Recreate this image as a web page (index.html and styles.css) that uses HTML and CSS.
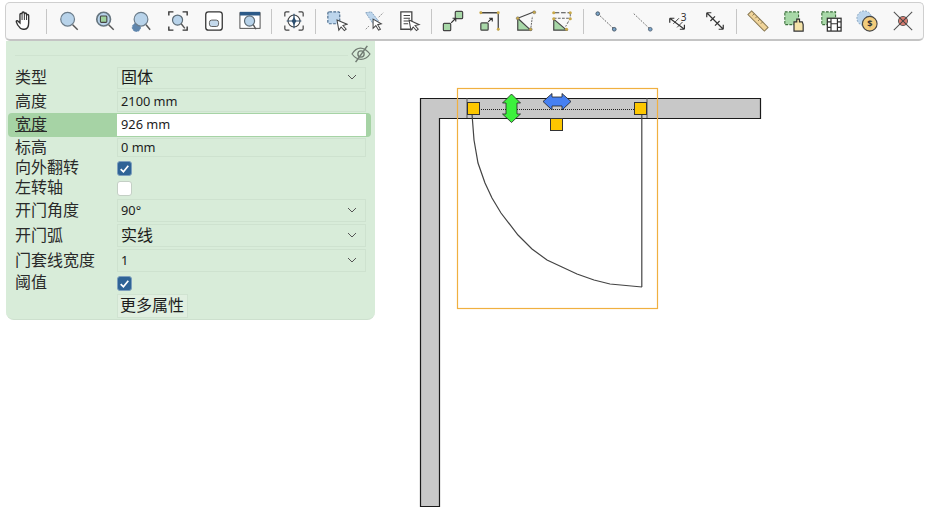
FILE: index.html
```html
<!DOCTYPE html>
<html lang="zh-CN">
<head>
    <meta charset="UTF-8">
    <title>门属性</title>
    <link rel="stylesheet" href="styles.css">
</head>
<body>
    <div class="toolbar">
        <span class="tool"><svg viewBox="0 0 24 24"><path d="M7 20c-2-2-4-5-4.500-7-.3-1.300 1.300-1.800 2-.8L6.500 14V5c0-1.600 2.300-1.600 2.300 0V3.500c0-1.700 2.500-1.700 2.500 0V4.500c0-1.600 2.400-1.600 2.400 0V6c0-1.500 2.300-1.500 2.300 0v8c0 4-1.500 7-4.500 7H10c-1.300 0-2.200-.3-3-1z" fill="#fff" stroke="#333" stroke-width="1.500"/><path d="M8.800 5v6M11.300 4v7M13.700 5v6" stroke="#333" stroke-width="1.100" fill="none"/></svg></span>
        <span class="sep"></span>
        <span class="tool"><svg viewBox="0 0 24 24"><circle cx="10.500" cy="10" r="7.500" fill="#b8d3ea" stroke="#6b7c8a" stroke-width="1.300"/><path d="M16 16l5.500 5.500" stroke="#555" stroke-width="1.600"/></svg></span>
        <span class="tool"><svg viewBox="0 0 24 24"><circle cx="10.500" cy="10" r="7.500" fill="#b8d3ea" stroke="#66757f" stroke-width="1.800"/><rect x="7" y="6.500" width="7" height="7" rx="1" fill="#9ed29c" stroke="#444" stroke-width="1.200"/><path d="M16 16l5.500 5.500" stroke="#555" stroke-width="1.600"/></svg></span>
        <span class="tool"><svg viewBox="0 0 24 24"><circle cx="7" cy="19" r="4.500" fill="#5f86ad" stroke="#5f86ad" stroke-dasharray="2 1"/><circle cx="12" cy="10" r="7.500" fill="#b8d3ea" stroke="#6b7c8a" stroke-width="1.300"/><path d="M17.500 16l4.500 5.500" stroke="#555" stroke-width="1.600"/></svg></span>
        <span class="tool"><svg viewBox="0 0 24 24"><path d="M2 6V2h5M17 2h5v4M2 18v4h5M17 22h5v-4" fill="none" stroke="#333" stroke-width="1.500"/><circle cx="11.500" cy="11" r="5.500" fill="#b8d3ea" stroke="#5c6b76" stroke-width="1.300"/><path d="M15.500 15l4 5" stroke="#555" stroke-width="1.500"/></svg></span>
        <span class="tool"><svg viewBox="0 0 24 24"><rect x="3" y="2" width="18" height="20" rx="3" fill="#fff" stroke="#333" stroke-width="1.400"/><rect x="7" y="11" width="10" height="7" rx="2.500" fill="#c4d9ec" stroke="#555"/></svg></span>
        <span class="tool"><svg viewBox="0 0 24 24"><rect x="1" y="3" width="22" height="17" fill="#fff" stroke="#444"/><rect x="1" y="2" width="22" height="4" fill="#2c5a88"/><circle cx="11.500" cy="12" r="5.500" fill="#b8d3ea" stroke="#5c6b76" stroke-width="1.300"/><path d="M15.500 16l3 5" stroke="#555" stroke-width="1.500"/></svg></span>
        <span class="sep"></span>
        <span class="tool"><svg viewBox="0 0 24 24"><path d="M2 7V3.500Q2 2 3.500 2H7M17 2h3.500Q22 2 22 3.500V7M2 17v3.500Q2 22 3.500 22H7M17 22h3.500q1.500 0 1.500-1.500V17" fill="none" stroke="#444" stroke-width="1.300"/><circle cx="12" cy="12" r="6.500" fill="#fff" stroke="#444" stroke-width="1.200"/><path d="M12 4v16M4 12h16" stroke="#2d4f70" stroke-width="1.300"/><path d="M12 7.500l2.500 4.500-2.500 4.500-2.500-4.500z" fill="#2d4f70"/></svg></span>
        <span class="sep"></span>
        <span class="tool"><svg viewBox="0 0 24 24"><rect x="2" y="2" width="13" height="13" rx="1.500" fill="#bcd5ec" stroke="#4f6f8f" stroke-width="1.300" stroke-dasharray="3 1.500"/><path d="M12 11l11 4.500-4.500 1.500 3.500 4-2 1.500-3.500-4-2.500 3.500z" fill="#fff" stroke="#444" stroke-width="1.100"/></svg></span>
        <span class="tool"><svg viewBox="0 0 24 24"><path d="M3 3l6-1 8 10-6 3z" fill="#bcd5ec" stroke="#7d9cba" stroke-dasharray="2 1"/><path d="M17 8l5-5M3 21l4-4" stroke="#888" stroke-dasharray="2 1"/><path d="M11 10l9 5-4 1 3 5-2 1-3-5-3 3z" fill="#fff" stroke="#444" stroke-width="1.100"/></svg></span>
        <span class="tool"><svg viewBox="0 0 24 24"><path d="M2 2h12v19H2z" fill="#fff" stroke="#444" stroke-width="1.400"/><path d="M5 6h7M5 9h7M5 12h7M5 15h5" stroke="#444" stroke-width="1.200"/><path d="M11 11l11 5-4.500 1 3.500 4-2 1.500-3.500-4-2.500 3.500z" fill="#fff" stroke="#444" stroke-width="1.100"/></svg></span>
        <span class="sep"></span>
        <span class="tool"><svg viewBox="0 0 24 24"><rect x="1.500" y="14.500" width="8" height="8" rx="1" fill="#a8d8a8" stroke="#444" stroke-width="1.300"/><rect x="14.500" y="1.500" width="8" height="8" rx="1" fill="#a8d8a8" stroke="#444" stroke-width="1.300"/><path d="M10 14l5-5M11.500 9H15v3.500" fill="none" stroke="#333" stroke-width="1.300"/></svg></span>
        <span class="tool"><svg viewBox="0 0 24 24"><rect x="2" y="14" width="8" height="8" rx="1" fill="#a8d8a8" stroke="#444" stroke-width="1.300"/><path d="M2 3h19v19" fill="none" stroke="#444" stroke-width="1.400"/><circle cx="2" cy="3" r="1.600" fill="#c8a848"/><circle cx="21" cy="3" r="1.600" fill="#c8a848"/><circle cx="21" cy="21" r="1.600" fill="#c8a848"/><path d="M10 13l4-4M11 9h3.500v3.500" fill="none" stroke="#333" stroke-width="1.200"/></svg></span>
        <span class="tool"><svg viewBox="0 0 24 24"><path d="M3 9l14 13H3z" fill="#a8d8a8" stroke="#444" stroke-width="1.300"/><path d="M3 9L21 2" fill="none" stroke="#444" stroke-width="1.200"/><path d="M17 22L19 7" fill="none" stroke="#555" stroke-dasharray="2 1"/><circle cx="3" cy="9" r="1.700" fill="#c8a848" stroke="#666" stroke-width=".5"/><circle cx="21" cy="2.500" r="1.700" fill="#c8a848" stroke="#666" stroke-width=".5"/><circle cx="17" cy="21" r="1.700" fill="#c8a848" stroke="#666" stroke-width=".5"/></svg></span>
        <span class="tool"><svg viewBox="0 0 24 24"><path d="M3 10l14 12H3z" fill="#a8d8a8" stroke="#444" stroke-width="1.300"/><path d="M4 3h16" fill="none" stroke="#444" stroke-width="1.200" stroke-dasharray="5 2"/><path d="M3 9h18M21 4v5L16 18" fill="none" stroke="#555" stroke-dasharray="3 1.500"/><circle cx="3" cy="3" r="1.700" fill="#c8a848"/><circle cx="21" cy="3" r="1.700" fill="#c8a848"/><circle cx="3" cy="9.500" r="1.700" fill="#c8a848"/><circle cx="21" cy="9.500" r="1.700" fill="#c8a848"/><circle cx="17" cy="21" r="1.700" fill="#c8a848"/></svg></span>
        <span class="sep"></span>
        <span class="tool"><svg viewBox="0 0 24 24"><path d="M3 4l18 17" stroke="#555" stroke-dasharray="2 1.500"/><circle cx="3" cy="4" r="2" fill="#7aa4c8" stroke="#456"/><circle cx="21" cy="21" r="2" fill="#7aa4c8" stroke="#456"/></svg></span>
        <span class="tool"><svg viewBox="0 0 24 24"><path d="M3 4l18 17" stroke="#666" stroke-dasharray="2 1.500"/><circle cx="21" cy="21" r="2" fill="#7aa4c8" stroke="#567"/></svg></span>
        <span class="tool"><svg viewBox="0 0 24 24"><path d="M3 9l16 12M3 9l5 0M3 9l0 5M19 21l-5 0M19 21l0-5" fill="none" stroke="#333" stroke-width="1.300"/><path d="M7 15l6-6M11 19l6-6" stroke="#333"/><text x="15" y="12" class="sup">3</text></svg></span>
        <span class="tool"><svg viewBox="0 0 24 24"><path d="M3 3l18 18M3 3h5M3 3v5M21 21h-5M21 21v-5M7 12l5-5M12 17l5-5" fill="none" stroke="#333" stroke-width="1.300"/></svg></span>
        <span class="sep"></span>
        <span class="tool"><svg viewBox="0 0 24 24"><path d="M5 1l18 18-4 4L1 5z" fill="#f0d49a" stroke="#8b7b55" stroke-width="1.100"/><path d="M6 6l2-2M9 9l2-2M12 12l2-2M15 15l2-2" stroke="#8b7b55"/></svg></span>
        <span class="tool"><svg viewBox="0 0 24 24"><rect x="2" y="2" width="15" height="14" fill="#a8d8a8" stroke="#3d6f3d" stroke-dasharray="3 1.500" stroke-width="1.200"/><path d="M12 23V13h3v-3h3v3h3l1 3v7z" fill="#f5e3a8" stroke="#333" stroke-width="1.300"/></svg></span>
        <span class="tool"><svg viewBox="0 0 24 24"><rect x="2" y="2" width="15" height="14" fill="#a8d8a8" stroke="#3d6f3d" stroke-dasharray="3 1.500" stroke-width="1.200"/><rect x="8" y="9" width="15" height="14" fill="#fff" stroke="#333" stroke-width="1.400"/><path d="M12 9v14M19 9v14M8 13h4M8 19h4M19 13h4M19 19h4M12 15h7" stroke="#333" stroke-width="1.300"/></svg></span>
        <span class="tool"><svg viewBox="0 0 24 24"><circle cx="9" cy="9" r="8" fill="#bcd5ec" stroke="#7d9cba" stroke-dasharray="2 1.500"/><circle cx="15" cy="15" r="8" fill="#f2cc7c" stroke="#444" stroke-width="1.200"/><text x="15" y="19" class="coin">$</text></svg></span>
        <span class="tool"><svg viewBox="0 0 24 24"><path d="M2 2l20 20M22 2L2 22" stroke="#555" stroke-width="1.200"/><circle cx="12" cy="12" r="5" fill="#d97c70" stroke="#555"/><path d="M8 8l8 8M16 8l-8 8" stroke="#444" stroke-width="1.100"/></svg></span>
    </div>

    <div class="workspace">
        <div class="props">
            <div class="props-head">
                <svg class="eye" viewBox="0 0 22 20"><path d="M1 10c3-5 6-6.500 9.500-6.500S17 5 21 10c-3 4.500-6 6-10 6s-7-2-10-6z" fill="none" stroke="#707a72" stroke-width="1.300"/><circle cx="11" cy="10" r="3.500" fill="none" stroke="#707a72" stroke-width="1.500"/><path d="M5 19L18 1" stroke="#707a72" stroke-width="1.700"/></svg>
            </div>
            <div class="row row-24"><span class="lbl">类型</span><div class="field">固体<svg class="chev" viewBox="0 0 10 6"><path d="M1 1l4 4 4-4"/></svg></div></div>
            <div class="row row-23"><span class="lbl">高度</span><div class="field num">2100 mm</div></div>
            <div class="row row-24 row-active"><span class="lbl">宽度</span><div class="field num">926 mm</div></div>
            <div class="row row-21"><span class="lbl">标高</span><div class="field num">0 mm</div></div>
            <div class="row row-20"><span class="lbl">向外翻转</span><span class="check on"><svg viewBox="0 0 12 12"><path d="M2.500 6.500l2.500 2.500 4.500-5.500"/></svg></span></div>
            <div class="row row-20"><span class="lbl">左转轴</span><span class="check"></span></div>
            <div class="row row-25"><span class="lbl">开门角度</span><div class="field num">90°<svg class="chev" viewBox="0 0 10 6"><path d="M1 1l4 4 4-4"/></svg></div></div>
            <div class="row row-25"><span class="lbl">开门弧</span><div class="field">实线<svg class="chev" viewBox="0 0 10 6"><path d="M1 1l4 4 4-4"/></svg></div></div>
            <div class="row row-25"><span class="lbl">门套线宽度</span><div class="field num">1<svg class="chev" viewBox="0 0 10 6"><path d="M1 1l4 4 4-4"/></svg></div></div>
            <div class="row row-20"><span class="lbl">阈值</span><span class="check on"><svg viewBox="0 0 12 12"><path d="M2.500 6.500l2.500 2.500 4.500-5.500"/></svg></span></div>
            <div class="row row-25"><span class="lbl"></span><span class="more">更多属性</span></div>
        </div>

        <svg class="drawing" viewBox="375 41 557 483">
            <path class="wall" d="M420.500 98.500H760.500V118.500H439.500V506.500H420.500Z"/>
            <path class="jamb" d="M467 98V118M647 98V118"/>
            <path class="dots" d="M479 109.500H634"/>
            <path class="leaf" d="M641.800 114V287"/>
            <polyline class="leaf" points="472,114 474,140 478,163 485,183 492,198 501,213 518,235 532,249 547,260 562,267 577,274 594,280 610,284 642,287"/>
            <rect class="selection" x="457.500" y="88.500" width="200" height="220"/>
            <rect class="grip" x="467.500" y="102.500" width="12" height="12"/>
            <rect class="grip" x="634.500" y="102.500" width="12" height="12"/>
            <rect class="grip" x="550.500" y="118.500" width="12" height="12"/>
            <path class="arrow-v" d="M511.500 94L520.500 103H517V114H520.500L511.500 122.500L502.500 114H506V103H502.500Z"/>
            <path class="arrow-h" d="M543 101.500L552 93.500V97H562V93.500L571 101.500L562 110V106H552V110Z"/>
        </svg>
    </div>
</body>
</html>
```

FILE: styles.css
```css
body {
    margin: 0;
    background: #fff;
    font-family: "Noto Sans", "Noto Sans CJK SC", sans-serif;
    color: #1c1c1c;
    overflow: hidden;
}

.toolbar {
    display: flex;
    align-items: center;
    box-sizing: border-box;
    width: 919px;
    height: 39px;
    margin: 2px 0 0 5px;
    padding-left: 1px;
    background: #f8f8f8;
    border: 1px solid #cfcfcf;
    border-bottom: 2px solid #c4c4c4;
    border-radius: 5px;
}
.tool {
    display: flex;
    justify-content: center;
    width: 36.250px;
    flex: none;
}
.tool svg {
    width: 22px;
    height: 22px;
}
.sep {
    width: 1px;
    height: 25px;
    margin: 0 3.200px;
    background: #c6c6c6;
    flex: none;
}
.sup {
    font-size: 11px;
    fill: #333;
}
.coin {
    font-size: 10px;
    font-weight: bold;
    text-anchor: middle;
    fill: #333;
}

.workspace {
    display: flex;
}

.props {
    box-sizing: border-box;
    width: 369px;
    height: 279px;
    margin-left: 6px;
    padding-left: 2px;
    background: #d8ecd9;
    border-radius: 0 0 8px 8px;
    border-bottom: 1px solid #cde0ce;
}
.props-head {
    display: flex;
    justify-content: flex-end;
    align-items: center;
    height: 25px;
    margin: 0 4px 0 7px;
    background: linear-gradient(#cfe3d0, #cfe3d0) left 14px / 333px 1px no-repeat;
}
.eye {
    width: 20px;
    height: 18px;
    margin-top: 1px;
}

.row {
    display: flex;
    align-items: center;
    width: 363px;
    box-sizing: border-box;
    padding: 0 5px 0 7px;
}
.row-20 { height: 20px; }
.row-21 { height: 21px; }
.row-23 { height: 23px; }
.row-24 { height: 24px; }
.row-25 { height: 25px; }

.lbl {
    width: 102px;
    flex: none;
    padding-bottom: 2px;
    font-size: 16px;
    line-height: 20px;
    color: #2a2a2a;
}
.field {
    display: flex;
    align-items: center;
    justify-content: space-between;
    box-sizing: border-box;
    width: 249px;
    height: calc(100% - 2px);
    padding: 0 8px 2px 3px;
    border: 1px solid #cee2cf;
    font-size: 16px;
    line-height: 20px;
}
.num {
    font-size: 12.800px;
}
.chev {
    width: 10px;
    height: 6px;
    fill: none;
    stroke: #555;
    stroke-width: 1;
}

.row-active {
    background: #a6d3a5;
    border-radius: 4px;
}
.row-active .lbl {
    text-decoration: underline;
}
.row-active .field {
    background: #fff;
    border-color: #fff;
}

.check {
    box-sizing: border-box;
    width: 15px;
    height: 15px;
    background: #fff;
    border: 1px solid #c4cfc5;
    border-radius: 3px;
}
.check svg {
    display: block;
    fill: none;
    stroke: #fff;
    stroke-width: 1.600;
}
.check.on {
    background: #2f6396;
    border-color: #7d9fbd;
}

.more {
    box-sizing: border-box;
    width: 71px;
    height: 24px;
    padding-left: 2px;
    background: #e0efe0;
    border: 1px solid #d0e3d1;
    font-size: 16px;
    line-height: 20px;
}

.drawing {
    flex: none;
    width: 557px;
    height: 483px;
}
.wall {
    fill: #c8c8c8;
    stroke: #1a1a1a;
    stroke-width: 1.200;
}
.jamb {
    stroke: #555;
    fill: none;
}
.dots {
    stroke: #222;
    stroke-dasharray: 1 1;
    fill: none;
}
.leaf {
    stroke: #444;
    stroke-width: 1.200;
    fill: none;
}
.selection {
    fill: none;
    stroke: #f0b040;
    stroke-width: 1.200;
}
.grip {
    fill: #fdc700;
    stroke: #333;
}
.arrow-v {
    fill: #3cf03c;
    stroke: #222;
    stroke-width: 0.800;
}
.arrow-h {
    fill: #4680f2;
    stroke: #222;
    stroke-width: 0.800;
}
```
